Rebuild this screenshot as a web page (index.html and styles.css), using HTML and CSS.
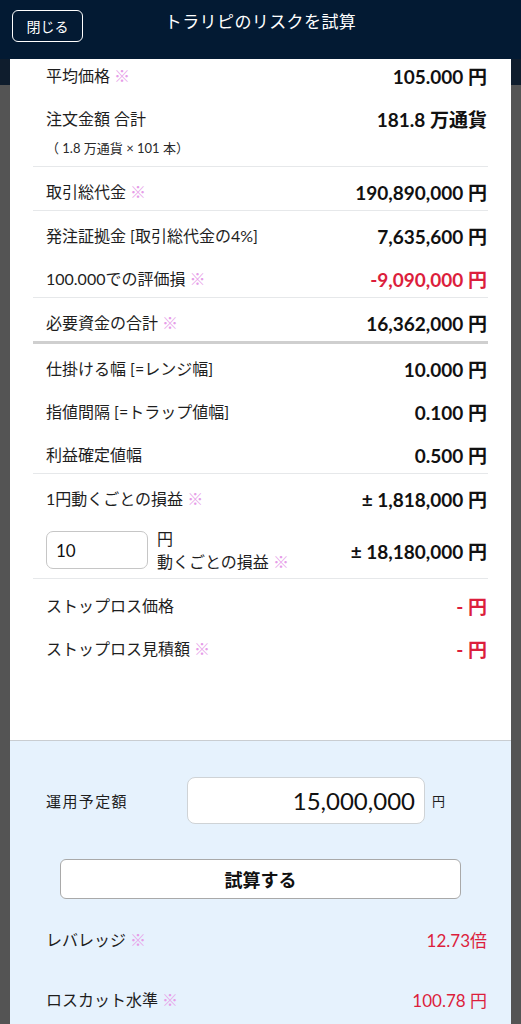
FILE: index.html
```html
<!DOCTYPE html>
<html lang="ja">
<head>
<meta charset="utf-8">
<title>トラリピのリスクを試算</title>
<link rel="stylesheet" href="styles.css">
</head>
<body>
<header class="topbar">
  <button class="close-btn" type="button">閉じる</button>
  <h1 class="title">トラリピのリスクを試算</h1>
  <span></span>
</header>
<div class="backdrop">
  <div class="panel">
    <div class="results">
      <section class="group group--first">
        <div class="row"><span class="label">平均価格 <span class="note">※</span></span><span class="value">105.000 円</span></div>
        <div class="row-wrap">
          <div class="row"><span class="label">注文金額 合計</span><span class="value">181.8 万通貨</span></div>
          <div class="sub">（ 1.8 万通貨 × 101 本）</div>
        </div>
      </section>
      <section class="group">
        <div class="row"><span class="label">取引総代金 <span class="note">※</span></span><span class="value">190,890,000 円</span></div>
      </section>
      <section class="group">
        <div class="row"><span class="label">発注証拠金 [取引総代金の4%]</span><span class="value">7,635,600 円</span></div>
        <div class="row"><span class="label">100.000での評価損 <span class="note">※</span></span><span class="value value--red">-9,090,000 円</span></div>
      </section>
      <section class="group group--thick">
        <div class="row"><span class="label">必要資金の合計 <span class="note">※</span></span><span class="value">16,362,000 円</span></div>
      </section>
      <section class="group">
        <div class="row"><span class="label">仕掛ける幅 [=レンジ幅]</span><span class="value">10.000 円</span></div>
        <div class="row"><span class="label">指値間隔 [=トラップ値幅]</span><span class="value">0.100 円</span></div>
        <div class="row"><span class="label">利益確定値幅</span><span class="value">0.500 円</span></div>
      </section>
      <section class="group">
        <div class="row"><span class="label">1円動くごとの損益 <span class="note">※</span></span><span class="value">± 1,818,000 円</span></div>
        <div class="row row--input">
          <div class="step">
            <input class="step-input" type="text" value="10">
            <div class="step-label"><span>円</span><span>動くごとの損益 <span class="note">※</span></span></div>
          </div>
          <span class="value">± 18,180,000 円</span>
        </div>
      </section>
      <section class="group group--last">
        <div class="row"><span class="label">ストップロス価格</span><span class="value value--red">- 円</span></div>
        <div class="row"><span class="label">ストップロス見積額 <span class="note">※</span></span><span class="value value--red">- 円</span></div>
      </section>
    </div>
    <div class="calc">
      <div class="budget">
        <span class="budget-label">運用予定額</span>
        <input class="budget-input" type="text" value="15,000,000">
        <span class="budget-unit">円</span>
      </div>
      <button class="calc-btn" type="button">試算する</button>
      <div class="calc-row"><span class="label">レバレッジ <span class="note">※</span></span><span class="calc-value">12.73倍</span></div>
      <div class="calc-row"><span class="label">ロスカット水準 <span class="note">※</span></span><span class="calc-value">100.78 円</span></div>
    </div>
  </div>
</div>
</body>
</html>
```

FILE: styles.css
```css
* { box-sizing: border-box; }

body {
  margin: 0;
  background: #545454;
  font-family: "Lato", "Noto Sans CJK JP", sans-serif;
  color: #1c1c1c;
  overflow: hidden;
}

.topbar {
  height: 59px;
  background: #031a33;
  display: grid;
  grid-template-columns: 1fr auto 1fr;
  align-items: start;
}

.close-btn {
  justify-self: start;
  margin: 10px 0 0 12px;
  width: 71px;
  height: 32px;
  border: 1.5px solid #ffffff;
  border-radius: 6px;
  background: transparent;
  color: #ffffff;
  font-family: "Lato", "Noto Sans CJK JP", sans-serif;
  font-size: 14px;
  padding: 0;
}

.title {
  margin: 11px 0 0;
  font-size: 17px;
  font-weight: 400;
  line-height: 22px;
  letter-spacing: 0.4px;
  color: #ffffff;
}

.backdrop {
  padding: 0 10px;
  background: linear-gradient(#0f1d2d 0 26px, #545454 26px);
}

.panel {
  background: #ffffff;
  min-height: 965px;
  display: flex;
  flex-direction: column;
}

.results {
  margin-top: -8px;
  padding: 0 23px;
}

.group {
  padding-top: 5px;
  display: flex;
  flex-direction: column;
  gap: 5px;
  border-bottom: 1px solid #e6e8ea;
}

.group--thick { border-bottom: 3px solid #cfcfcf; }

.group--last {
  padding-top: 7px;
  padding-bottom: 73px;
  border-bottom: 0;
}

.row {
  height: 38px;
  display: flex;
  align-items: center;
  justify-content: space-between;
  padding: 0 1px 0 13px;
}

.row--input { height: 56px; }

.sub {
  padding-left: 13px;
  margin-bottom: 7px;
  font-size: 13px;
  line-height: 22px;
  color: #2a2a2a;
}

.label {
  font-size: 16px;
  color: #1e1e1e;
}

.note { color: #e69de8; }

.value {
  font-size: 19px;
  font-weight: 700;
  color: #111111;
}

.value--red { color: #dc1e3c; }

.step {
  display: flex;
  align-items: center;
}

.step-input {
  width: 102px;
  height: 38px;
  border: 1px solid #c6c6c6;
  border-radius: 7px;
  padding: 0 0 0 9px;
  font-family: "Lato", "Noto Sans CJK JP", sans-serif;
  font-size: 17px;
  color: #111111;
  background: #ffffff;
}

.step-label {
  margin-left: 9px;
  display: flex;
  flex-direction: column;
  font-size: 16px;
  line-height: 23px;
  color: #1e1e1e;
}

.calc {
  flex: 1;
  background: #e6f2fd;
  border-top: 1px solid #c9cdd1;
  padding: 36px 23px 20px;
}

.budget {
  display: flex;
  align-items: center;
}

.budget-label {
  width: 154px;
  padding-left: 13px;
  font-size: 15px;
  letter-spacing: 1.4px;
  color: #1e1e1e;
}

.budget-input {
  width: 238px;
  height: 47px;
  border: 1px solid #cfd3d6;
  border-radius: 8px;
  background: #ffffff;
  text-align: right;
  padding: 0 9px 0 0;
  font-family: "Lato", "Noto Sans CJK JP", sans-serif;
  font-size: 24px;
  color: #111111;
}

.budget-unit {
  margin-left: 7px;
  font-size: 13px;
  color: #1e1e1e;
}

.calc-btn {
  display: block;
  margin: 35px 27px 0;
  width: calc(100% - 54px);
  height: 40px;
  border: 1px solid #a9a9a9;
  border-radius: 6px;
  background: #ffffff;
  font-family: "Lato", "Noto Sans CJK JP", sans-serif;
  font-size: 18px;
  font-weight: 700;
  color: #111111;
  padding: 0;
}

.calc-row {
  margin-top: 20px;
  height: 40px;
  display: flex;
  align-items: center;
  justify-content: space-between;
  padding: 0 1px 0 13px;
}

.calc-value {
  font-size: 17px;
  color: #dc1e3c;
}
```
